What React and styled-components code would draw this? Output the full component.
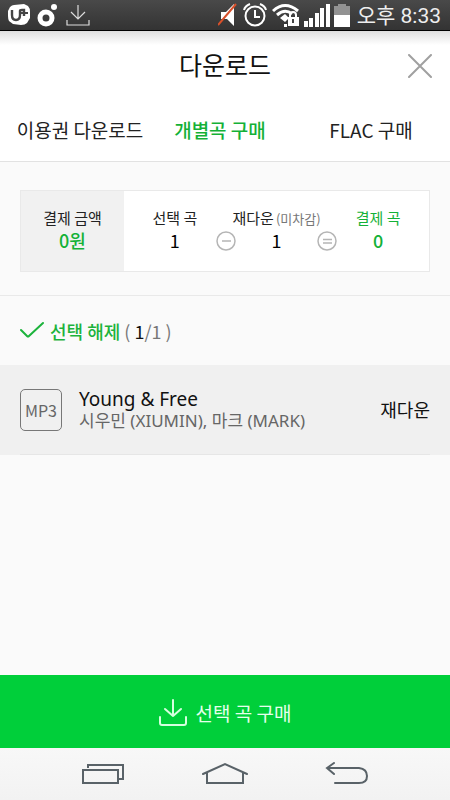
import { useState } from "react";
import styled, { createGlobalStyle } from "styled-components";

const tabs = ["이용권 다운로드", "개별곡 구매", "FLAC 구매"];

const songs = [
  { title: "Young & Free", artist: "시우민 (XIUMIN), 마크 (MARK)", type: "MP3", state: "재다운" },
];

const StatusIcons = () => (
  <>
    <IconGroup>
      <svg width="22" height="22" viewBox="0 0 22 22" aria-hidden="true">
        <path d="M6 1L16 0L20 2Q22 4 22 8V14L19 19Q17 21 13 21L5 20L1 17Q0 15 0 12V7L2 3Q4 1 6 1Z" fill="#fff" />
        <path d="M4 6V11Q4 16 8 16Q12 16 12 11V7Q12 6 14 6H16V12" fill="none" stroke="#444" strokeWidth="2.400" />
        <path d="M13 9H20" fill="none" stroke="#444" strokeWidth="2" />
      </svg>
      <svg width="22" height="24" viewBox="0 0 22 24" aria-hidden="true">
        <circle cx="9" cy="15" r="6" fill="none" stroke="#fff" strokeWidth="5" />
        <circle cx="17" cy="4" r="3" fill="#fff" />
      </svg>
      <svg width="24" height="24" viewBox="0 0 24 24" fill="none" stroke="#ddd" strokeWidth="1.200" aria-hidden="true">
        <path d="M12 2V16M5 9L12 16L19 9M1 17V22H23V17" />
      </svg>
    </IconGroup>
    <IconGroup $end>
      <svg width="20" height="24" viewBox="0 0 20 24" aria-hidden="true">
        <path d="M3 9H8L16 1V23L9 16H3Z" fill="#fff" />
        <path d="M0 22L18 1" stroke="#d8502a" strokeWidth="2" />
      </svg>
      <svg width="26" height="26" viewBox="0 0 26 26" fill="none" stroke="#fff" strokeWidth="2" aria-hidden="true">
        <circle cx="13" cy="14" r="9.500" />
        <path d="M13 8V15H18" />
        <path d="M2 8Q3 4 8 2M24 8Q23 4 18 2" />
      </svg>
      <svg width="28" height="24" viewBox="0 0 28 24" fill="none" stroke="#fff" strokeWidth="3" aria-hidden="true">
        <path d="M1 8Q13 -3 26 8M5 12Q13 5 20 11" />
        <path d="M8 15L13 11L16 14V16L13 19Z" fill="#fff" stroke="none" />
        <path d="M12 21H15V24H12Z" fill="#fff" stroke="none" />
        <path d="M18 14V12Q18 9 21 9Q24 9 24 12V14" strokeWidth="2" />
        <rect x="16" y="14" width="11" height="9" fill="#fff" stroke="none" />
        <path d="M21 16V20" stroke="#444" strokeWidth="2" />
      </svg>
      <svg width="26" height="24" viewBox="0 0 26 24" fill="#fff" aria-hidden="true">
        <path d="M0 18H4V24H0ZM5 15H9V24H5ZM11 10H15V24H11ZM16 5H20V24H16ZM22 1H26V24H22Z" />
      </svg>
      <svg width="16" height="24" viewBox="0 0 16 24" aria-hidden="true">
        <path d="M4 1H12V3H16V12H0V3H4Z" fill="#929292" />
        <path d="M0 12H16V24H0Z" fill="#fff" />
      </svg>
    </IconGroup>
  </>
);

const App = () => {
  const [activeTab, setActiveTab] = useState(1);
  const [selected, setSelected] = useState(true);

  return (
    <Page>
      <GlobalStyle />
      <StatusBar>
        <StatusIcons />
        <Clock>오후 8:33</Clock>
      </StatusBar>

      <Header>
        <Title>다운로드</Title>
        <CloseButton type="button" aria-label="닫기">
          <svg width="24" height="24" viewBox="0 0 24 24" stroke="#a0a0a0" strokeWidth="2" strokeLinecap="round">
            <path d="M1 1L23 23M23 1L1 23" />
          </svg>
        </CloseButton>
      </Header>

      <Tabs>
        {tabs.map((tab, i) => (
          <Tab key={tab} type="button" $active={i === activeTab} onClick={() => setActiveTab(i)}>
            {tab}
          </Tab>
        ))}
      </Tabs>

      <Content>
        <Summary>
          <Price>
            <Label>결제 금액</Label>
            <Value $green>0원</Value>
          </Price>
          <Formula>
            <Cell>
              <Label>선택 곡</Label>
              <Value>1</Value>
            </Cell>
            <Operator width="20" height="20" viewBox="0 0 20 20">
              <circle cx="10" cy="10" r="9" />
              <path d="M6 10H15" />
            </Operator>
            <Cell>
              <Label>
                재다운<Note>(미차감)</Note>
              </Label>
              <Value>1</Value>
            </Cell>
            <Operator width="20" height="20" viewBox="0 0 20 20">
              <circle cx="10" cy="10" r="9" />
              <path d="M6 8.500H15M6 12H15" />
            </Operator>
            <Cell>
              <Label $green>결제 곡</Label>
              <Value $green>0</Value>
            </Cell>
          </Formula>
        </Summary>

        <SelectRow>
          <SelectButton type="button" onClick={() => setSelected(!selected)}>
            <svg width="24" height="20" viewBox="0 0 24 20" fill="none" stroke="#1cb33c" strokeWidth="2" strokeLinecap="round">
              <path d="M1 9L7 15Q8 16 9 15L23 2" />
            </svg>
            {selected ? "선택 해제" : "전체 선택"}
          </SelectButton>
          <Count>
            ( <b>{selected ? 1 : 0}</b>/1 )
          </Count>
        </SelectRow>

        <SongList>
          {songs.map((song) => (
            <Song key={song.title} $selected={selected}>
              <SongInner>
                <FileType>{song.type}</FileType>
                <SongText>
                  <SongTitle>{song.title}</SongTitle>
                  <Artist>{song.artist}</Artist>
                </SongText>
                <SongState>{song.state}</SongState>
              </SongInner>
            </Song>
          ))}
        </SongList>
      </Content>

      <BuyButton type="button">
        <svg width="28" height="28" viewBox="0 0 28 28" fill="none" stroke="#d5ffdf" strokeWidth="2" strokeLinecap="round" strokeLinejoin="round" aria-hidden="true">
          <path d="M14 1V17M6 10L14 17L22 10M1 18V24Q1 26 3 26H25Q27 26 27 24V18" />
        </svg>
        선택 곡 구매
      </BuyButton>

      <NavBar>
        <NavButton type="button" aria-label="최근 앱">
          <svg width="44" height="24" viewBox="0 0 44 24">
            <path d="M7 6V3H42V17H38" />
            <path d="M2 8H37V21H2Z" />
          </svg>
        </NavButton>
        <NavButton type="button" aria-label="홈">
          <svg width="48" height="24" viewBox="0 0 48 24">
            <path d="M2 12L24 2L46 12" strokeLinecap="round" />
            <path d="M6 11V21H42V11" />
          </svg>
        </NavButton>
        <NavButton type="button" aria-label="뒤로">
          <svg width="44" height="24" viewBox="0 0 44 24">
            <path d="M9 1L2 6L9 12M2 6H34Q42 7 42 14Q42 21 34 21H10" strokeLinecap="round" />
          </svg>
        </NavButton>
      </NavBar>
    </Page>
  );
};

const GlobalStyle = createGlobalStyle`
  * {
    box-sizing: border-box;
  }
  body {
    margin: 0;
    font-family: "Noto Sans CJK KR", "Noto Sans", sans-serif;
    color: #111;
  }
  button {
    border: 0;
    padding: 0;
    background: none;
    font: inherit;
    color: inherit;
    cursor: pointer;
  }
  svg {
    display: block;
    flex: none;
  }
  h1, h2, p, ul {
    margin: 0;
    padding: 0;
  }
`;

const Page = styled.div`
  display: flex;
  flex-direction: column;
  min-height: 100vh;
  background: #fafafa;
`;

const StatusBar = styled.div`
  display: flex;
  align-items: center;
  height: 31px;
  padding: 0 9px 0 8px;
  border-bottom: 1px solid #000;
  background: linear-gradient(#494949, #333);
`;

const IconGroup = styled.div`
  display: flex;
  align-items: center;
  gap: ${({ $end }) => ($end ? "4px" : "7px")};
  margin-left: ${({ $end }) => ($end ? "auto" : "0")};
`;

const Clock = styled.span`
  margin-left: 7px;
  padding-top: 2px;
  font-family: Roboto, "Noto Sans CJK KR", sans-serif;
  font-size: 21px;
  line-height: 28px;
  color: #eee;
  white-space: nowrap;
`;

const Header = styled.header`
  display: grid;
  grid-template-columns: 24px 1fr 24px;
  align-items: center;
  height: 68px;
  padding: 2px 18px 0;
  background: linear-gradient(#dedede, #fff 14px);
`;

const Title = styled.h1`
  grid-column: 2;
  padding-bottom: 4px;
  text-align: center;
  font-size: 25px;
  font-weight: 400;
  line-height: 36px;
`;

const CloseButton = styled.button`
  width: 24px;
  height: 24px;
`;

const Tabs = styled.nav`
  display: grid;
  grid-template-columns: 32fr 24fr 34fr;
  height: 63px;
  border-bottom: 1px solid #e2e2e2;
  background: #fff;
`;

const Tab = styled.button`
  padding-bottom: 1px;
  font-size: 19px;
  line-height: 28px;
  font-weight: ${({ $active }) => ($active ? 500 : 400)};
  color: ${({ $active }) => ($active ? "#14b137" : "#222")};
  white-space: nowrap;

  &:last-child {
    padding-left: 12px;
  }
`;

const Content = styled.main`
  flex: 1;
`;

const Summary = styled.section`
  display: flex;
  margin: 28px 20px 23px;
  border: 1px solid #e9e9e9;
  background: #fff;
`;

const Price = styled.div`
  width: 103px;
  padding: 16px 0 20px;
  background: #f1f1f1;
  text-align: center;
`;

const Formula = styled.div`
  display: flex;
  flex: 1;
  align-items: flex-end;
  padding: 16px 0 20px;
`;

const Cell = styled.div`
  flex: 1 1 0;
  min-width: 0;
  text-align: center;
`;

const Label = styled.p`
  font-size: 15px;
  line-height: 22px;
  color: ${({ $green }) => ($green ? "#14b137" : "#222")};
  white-space: nowrap;
`;

const Note = styled.small`
  margin-left: 2px;
  font-size: 13px;
  line-height: 16px;
  color: #777;
`;

const Value = styled.p`
  font-size: 18px;
  font-weight: ${({ $green }) => ($green ? 500 : 400)};
  line-height: 22px;
  color: ${({ $green }) => ($green ? "#14b137" : "#000")};
`;

const Operator = styled.svg`
  margin: 0 -10px;
  fill: none;
  stroke: #b5b5b5;
  stroke-width: 1.5px;
`;

const SelectRow = styled.div`
  display: flex;
  align-items: center;
  gap: 4px;
  height: 70px;
  padding: 1px 20px 0;
  border-top: 1px solid #e9e9e9;
  font-size: 18px;
  line-height: 26px;
`;

const SelectButton = styled.button`
  display: flex;
  align-items: center;
  gap: 6px;
  font-weight: 500;
  color: #1cb33c;
`;

const Count = styled.span`
  color: #777;

  b {
    font-weight: 400;
    color: #111;
  }
`;

const SongList = styled.ul`
  list-style: none;
`;

const Song = styled.li`
  padding: 0 20px;
  background: ${({ $selected }) => ($selected ? "#f0f0f0" : "#fafafa")};
`;

const SongInner = styled.div`
  display: flex;
  align-items: center;
  height: 90px;
  border-bottom: 1px solid #e6e6e6;
`;

const FileType = styled.span`
  display: flex;
  flex: none;
  align-items: center;
  justify-content: center;
  width: 42px;
  height: 42px;
  border: 1px solid #777;
  border-radius: 5px;
  font-size: 16px;
  color: #666;
`;

const SongText = styled.div`
  flex: 1;
  min-width: 0;
  padding: 0 12px 0 17px;
  font-family: "Noto Sans", "Noto Sans CJK KR", sans-serif;
`;

const SongTitle = styled.h2`
  font-size: 19px;
  font-weight: 400;
  line-height: 22px;
`;

const Artist = styled.p`
  font-size: 17px;
  line-height: 22px;
  color: #666;
`;

const SongState = styled.span`
  padding-bottom: 2px;
  font-size: 18px;
  line-height: 26px;
`;

const BuyButton = styled.button`
  display: flex;
  align-items: center;
  justify-content: center;
  gap: 9px;
  height: 73px;
  padding-top: 2px;
  background: #00cf3a;
  font-size: 19px;
  line-height: 28px;
  color: #e6ffec;
`;

const NavBar = styled.nav`
  display: flex;
  align-items: center;
  justify-content: space-between;
  height: 52px;
  padding: 0 81px;
  background: linear-gradient(#f8f8f8, #f2f2f2);
`;

const NavButton = styled.button`
  fill: none;
  stroke: #596268;
  stroke-width: 2;
`;

export default App;
